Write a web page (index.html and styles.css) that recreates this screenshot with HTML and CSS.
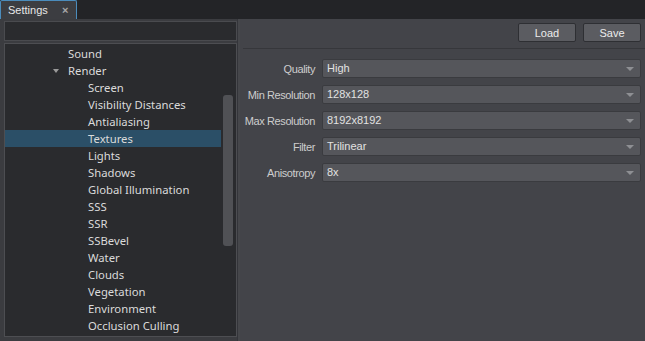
FILE: index.html
```html
<!DOCTYPE html>
<html>
<head>
<meta charset="utf-8">
<link rel="stylesheet" href="styles.css">
</head>
<body>
<div class="tabbar">
  <div class="tab"><span class="tab-title">Settings</span><span class="tab-close">×</span></div>
</div>
<div class="main">
  <div class="left">
    <div class="search"></div>
    <div class="tree">
      <div class="rows">
        <div class="row l1">Sound</div>
        <div class="row l1"><span class="arrow"></span>Render</div>
        <div class="row l2">Screen</div>
        <div class="row l2">Visibility Distances</div>
        <div class="row l2">Antialiasing</div>
        <div class="row l2 sel">Textures</div>
        <div class="row l2">Lights</div>
        <div class="row l2">Shadows</div>
        <div class="row l2">Global Illumination</div>
        <div class="row l2">SSS</div>
        <div class="row l2">SSR</div>
        <div class="row l2">SSBevel</div>
        <div class="row l2">Water</div>
        <div class="row l2">Clouds</div>
        <div class="row l2">Vegetation</div>
        <div class="row l2">Environment</div>
        <div class="row l2">Occlusion Culling</div>
      </div>
      <div class="scroll"><div class="thumb"></div></div>
    </div>
  </div>
  <div class="divider"></div>
  <div class="right">
    <div class="toolbar">
      <button class="btn">Load</button>
      <button class="btn">Save</button>
    </div>
    <div class="sep"></div>
    <div class="form">
      <div class="frow"><label class="lbl">Quality</label><div class="combo">High<span class="caret"></span></div></div>
      <div class="frow"><label class="lbl">Min Resolution</label><div class="combo">128x128<span class="caret"></span></div></div>
      <div class="frow"><label class="lbl">Max Resolution</label><div class="combo">8192x8192<span class="caret"></span></div></div>
      <div class="frow"><label class="lbl">Filter</label><div class="combo">Trilinear<span class="caret"></span></div></div>
      <div class="frow"><label class="lbl">Anisotropy</label><div class="combo">8x<span class="caret"></span></div></div>
    </div>
  </div>
</div>
</body>
</html>
```

FILE: styles.css
```css
* { box-sizing: border-box; }
html, body { margin: 0; padding: 0; }
body {
  width: 645px;
  height: 341px;
  overflow: hidden;
  background: #232427;
  font-family: "Liberation Sans", Arial, sans-serif;
  font-size: 11px;
  color: #d6d6d6;
}
.tabbar {
  height: 19px;
  display: flex;
  align-items: flex-end;
}
.tab {
  width: 77px;
  height: 19px;
  background: #3c3d41;
  border: 1px solid #4b8cbc;
  border-bottom: none;
  border-radius: 2px 2px 0 0;
  display: flex;
  align-items: center;
  padding: 0 0 0 7px;
  color: #e8e8e8;
  font-size: 11px;
}
.tab-title { flex: 1; }
.tab-close {
  color: #a8a8a8;
  font-size: 11px;
  width: 14px;
  font-weight: bold;
}
.main {
  display: flex;
  height: 322px;
  background: #3b3c40;
}
.left {
  width: 237px;
  padding: 2px 0 4px 4px;
  display: flex;
  flex-direction: column;
}
.search {
  height: 20px;
  background: #2a2b2e;
  border: 1px solid #4a4b4f;
  flex: none;
}
.tree {
  margin-top: 2px;
  flex: 1;
  background: #2a2b2e;
  border: 1px solid #4d4e52;
  position: relative;
  overflow: hidden;
  font-family: "Noto Sans", "DejaVu Sans", sans-serif;
  font-size: 11.3px;
  color: #dadada;
}
.rows { padding-top: 1px; }
.row {
  height: 17px;
  line-height: 17px;
  white-space: nowrap;
  width: 216px;
  position: relative;
}
.l1 { padding-left: 63px; }
.l2 { padding-left: 83px; }
.row.sel { background: #2b4f67; }
.arrow {
  position: absolute;
  left: 48px;
  top: 7px;
  width: 0;
  height: 0;
  border-left: 3.5px solid transparent;
  border-right: 3.5px solid transparent;
  border-top: 4px solid #9a9a9a;
}
.scroll {
  position: absolute;
  right: 3px;
  top: 51px;
  width: 10px;
}
.thumb {
  height: 151px;
  background: #505155;
  border-radius: 3px;
}
.divider {
  width: 3px;
  background: #46474b;
  border-left: 1px solid #34353a;
}
.right {
  flex: 1;
  background: #434449;
  display: flex;
  flex-direction: column;
}
.toolbar {
  display: flex;
  justify-content: flex-end;
  gap: 7px;
  padding: 4px 4px 0 0;
}
.btn {
  width: 58px;
  height: 19px;
  background: #5b5c61;
  border: 1px solid #2e2f33;
  border-radius: 2px;
  color: #ececec;
  font-family: "Liberation Sans", Arial, sans-serif;
  font-size: 11px;
  padding: 0;
}
.sep {
  margin: 6px 0 0 3px;
  height: 1px;
  background: #36373b;
}
.form {
  padding: 10px 4px 0 0;
  display: flex;
  flex-direction: column;
  gap: 7px;
}
.frow {
  display: flex;
  align-items: center;
  height: 19px;
}
.lbl {
  width: 82px;
  flex: none;
  text-align: right;
  color: #cdcdcd;
  padding-right: 7px;
  white-space: nowrap;
  letter-spacing: -0.4px;
}
.combo {
  flex: 1;
  height: 19px;
  background: #55565b;
  border: 1px solid #3a3b3f;
  border-radius: 2px;
  padding-left: 4px;
  line-height: 17px;
  color: #e2e2e2;
  position: relative;
}
.caret {
  position: absolute;
  right: 6px;
  top: 7px;
  width: 0;
  height: 0;
  border-left: 4px solid transparent;
  border-right: 4px solid transparent;
  border-top: 4px solid #8e8f93;
}
```
